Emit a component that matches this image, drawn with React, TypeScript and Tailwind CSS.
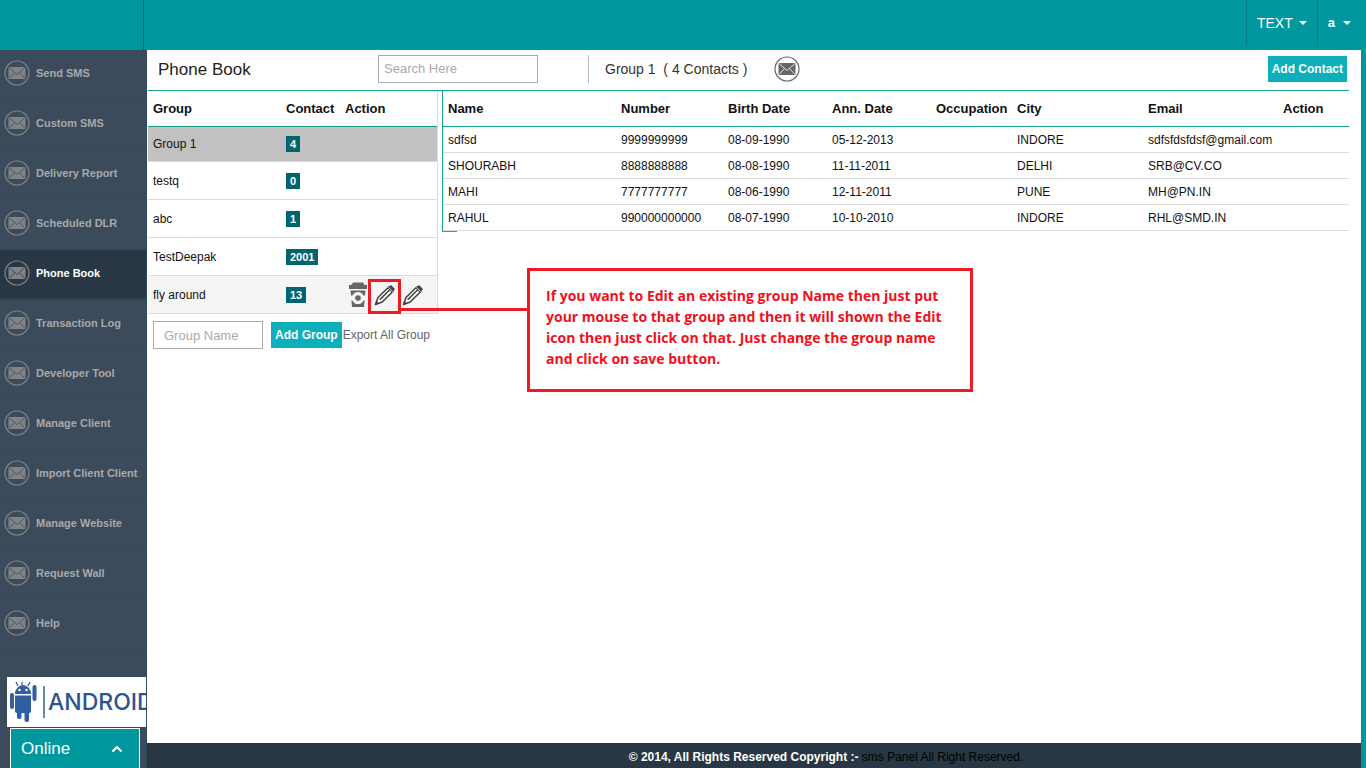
import { ChevronUp } from "lucide-react";
import { useState } from "react";
import clsx from "clsx";

const menuItems = [
  "Send SMS",
  "Custom SMS",
  "Delivery Report",
  "Scheduled DLR",
  "Phone Book",
  "Transaction Log",
  "Developer Tool",
  "Manage Client",
  "Import Client Client",
  "Manage Website",
  "Request Wall",
  "Help",
];

const groups = [
  { name: "Group 1", count: 4 },
  { name: "testq", count: 0 },
  { name: "abc", count: 1 },
  { name: "TestDeepak", count: 2001 },
  { name: "fly around", count: 13 },
];

const contacts = [
  { name: "sdfsd", number: "9999999999", birth: "08-09-1990", ann: "05-12-2013", city: "INDORE", email: "sdfsfdsfdsf@gmail.com" },
  { name: "SHOURABH", number: "8888888888", birth: "08-08-1990", ann: "11-11-2011", city: "DELHI", email: "SRB@CV.CO" },
  { name: "MAHI", number: "7777777777", birth: "08-06-1990", ann: "12-11-2011", city: "PUNE", email: "MH@PN.IN" },
  { name: "RAHUL", number: "990000000000", birth: "08-07-1990", ann: "10-10-2010", city: "INDORE", email: "RHL@SMD.IN" },
];

function MailIcon({ className, line }: { className?: string; line: string }) {
  return (
    <svg viewBox="0 0 26 26" className={clsx("w-[26px] h-[26px] shrink-0", className)} aria-hidden="true">
      <circle cx="13" cy="13" r="12" fill="none" stroke="currentColor" strokeWidth="1.2" />
      <rect x="4.5" y="7" width="17" height="12" fill="currentColor" />
      <path d="M5 7.5 13 14.5 21 7.5M5 18.5 10.5 12.5M21 18.5 15.5 12.5" fill="none" stroke={line} strokeWidth="0.8" />
    </svg>
  );
}

function BinIcon() {
  return (
    <svg viewBox="0 0 20 26" className="w-5 h-[26px]" aria-hidden="true">
      <path d="M5 0.5h10l1.5 2.5H19v4H1V3h2.5z" fill="#666" />
      <path d="M2.5 8.5h15L16 25H4z" fill="#666" />
      <path d="M1 13.5h3.5a6 6 0 0 1 11 0H19v5h-3.5a6 6 0 0 1-11 0H1z" fill="#f5f5f5" />
      <circle cx="10" cy="16" r="2.8" fill="#666" />
    </svg>
  );
}

function PencilIcon() {
  return (
    <svg viewBox="0 0 22 22" className="w-[22px] h-[22px]" aria-hidden="true">
      <path d="M1.5 20.5 4 13.5 15 2.8 19.2 7 8.2 18z" fill="#fff" stroke="#444" strokeWidth="1.6" strokeLinejoin="round" />
      <path d="M5.8 15.6 15.8 5.8" stroke="#444" strokeWidth="1.5" />
      <path d="M13.6 4.2 17 1l4 4-3.2 3.4z" fill="#444" />
      <path d="M14.3 3.2 18.8 7.7" stroke="#fff" strokeWidth="0.8" />
      <path d="M1 21 2.5 17 5 19.5z" fill="#444" />
    </svg>
  );
}

function AndroidLogo() {
  return (
    <svg viewBox="0 0 30 42" className="w-[30px] h-[42px] shrink-0" aria-hidden="true">
      <g fill="#2f5f9e">
        <path d="M7 13a8 9 0 0 1 16 0z" />
        <path d="M7 14.5h16V30a2 2 0 0 1-2 2H9a2 2 0 0 1-2-2z" />
        <rect x="2" y="12" width="4" height="16" rx="2" />
        <rect x="24.5" y="4" width="4" height="16" rx="2" />
        <rect x="9" y="28" width="4.5" height="10" rx="2" />
        <rect x="16.5" y="28" width="4.5" height="13" rx="2" />
      </g>
      <path d="M10 5 8 1M14 4V1M20 5l2-4" stroke="#2f5f9e" strokeWidth="1.3" />
      <circle cx="11.5" cy="9" r="1.2" fill="#fff" />
      <circle cx="18.5" cy="9" r="1.2" fill="#fff" />
    </svg>
  );
}

function Caret() {
  return <span className="border-x-4 border-t-4 border-x-transparent border-t-white" />;
}

function Header() {
  return (
    <header className="flex h-[50px] bg-[#00979e] text-white">
      <div className="w-36 border-r border-[#007077]" />
      <div className="ml-auto flex pb-1">
        <button className="flex items-center gap-[6px] border-l border-[#007b82] px-[10px] text-sm">
          TEXT <Caret />
        </button>
        <button className="flex items-center gap-2 border-l border-[#007b82] pl-[10px] pr-[15px] text-[13px] font-bold">
          a <Caret />
        </button>
      </div>
    </header>
  );
}

function Sidebar() {
  return (
    <aside className="flex w-[147px] shrink-0 flex-col overflow-hidden border-r border-[#2c4a5c] bg-[#3b4b5b]">
      <nav>
        {menuItems.map((item) => {
          const active = item === "Phone Book";
          return (
            <a
              key={item}
              href="#"
              className={clsx(
                "flex h-[50px] items-center gap-[6px] border-b-2 pl-1 pb-[2px] text-[11px] font-bold whitespace-nowrap",
                active
                  ? "border-[#34434f] bg-[#283743] text-white"
                  : "border-[#394959] text-[#a9a9a9]"
              )}
            >
              <MailIcon className="text-[#818487]" line={active ? "#283743" : "#3b4b5b"} />
              {item}
            </a>
          );
        })}
      </nav>
      <div className="mt-auto ml-[7px] flex h-[50px] items-center overflow-hidden bg-white pl-px">
        <AndroidLogo />
        <div className="ml-[5px] h-8 border-l-2 border-[#5f8f9e]" />
        <span className="pl-[3px] text-[23px] font-medium text-[#2b5590] font-['Inter',sans-serif]">ANDROID</span>
      </div>
      <button className="mr-[6px] ml-[10px] mt-px flex h-10 items-center justify-between border border-b-0 border-white bg-[#00979e] pl-[10px] pr-[14px] text-[17px] text-white">
        Online
        <ChevronUp className="h-4 w-4" strokeWidth={3} />
      </button>
    </aside>
  );
}

function Toolbar() {
  return (
    <div className="flex h-10 items-center border-b border-[#16a085] pb-1 pl-[10px]">
      <h1 className="w-[220px] pt-[3px] text-[17px] text-[#222]">Phone Book</h1>
      <input
        type="search"
        aria-label="Search contacts"
        placeholder="Search Here"
        className="h-7 w-40 border border-[#aaa] px-[5px] text-[13px] placeholder:text-[#aaa]"
      />
      <div className="ml-[50px] flex h-7 items-center border-l border-[#bbb] pl-4">
        <h2 className="w-[169px] text-sm whitespace-pre text-[#333]">Group 1  ( 4 Contacts )</h2>
        <button aria-label="Send message">
          <MailIcon className="text-[#666]" line="#fff" />
        </button>
      </div>
      <button className="ml-auto mr-[2px] h-[26px] bg-[#0cafba] px-1 text-xs font-bold text-white">
        Add Contact
      </button>
    </div>
  );
}

function GroupList() {
  const [groupName, setGroupName] = useState("");

  return (
    <section className="w-[290px] shrink-0">
      <table className="w-full table-fixed border-separate border-spacing-0 border-r border-[#ddd] text-left text-xs text-[#111]">
        <colgroup>
          <col className="w-[138px]" />
          <col className="w-[59px]" />
          <col />
        </colgroup>
        <thead>
          <tr className="h-9 text-[13px] [&>th]:border-b [&>th]:border-[#16a085]">
            <th className="pl-[5px]">Group</th>
            <th>Contact</th>
            <th>Action</th>
          </tr>
        </thead>
        <tbody>
          {groups.map((group, i) => (
            <tr
              key={group.name}
              className={clsx(
                "[&>td]:border-b [&>td]:border-[#ddd]",
                i === 0 ? "h-[35px] bg-[#c1c1c1]" : "h-[38px]",
                i === 4 && "bg-[#f5f5f5]"
              )}
            >
              <td className="pl-[5px]">{group.name}</td>
              <td>
                <span className="inline-block h-4 bg-[#00656e] px-1 text-[11px] leading-4 font-bold text-white">
                  {group.count}
                </span>
              </td>
              <td>
                {group.name === "fly around" && (
                  <div className="flex items-center gap-[6px] pl-[3px]">
                    <button aria-label="Delete group">
                      <BinIcon />
                    </button>
                    <button aria-label="Edit group" className="relative">
                      <PencilIcon />
                      <span className="absolute -top-[5px] -right-[5px] -bottom-2 -left-[6px] border-3 border-[#ed1c24]" />
                    </button>
                    <button aria-label="Save group">
                      <PencilIcon />
                    </button>
                  </div>
                )}
              </td>
            </tr>
          ))}
        </tbody>
      </table>
      <form className="flex items-center pt-[7px] pl-[5px]" onSubmit={(e) => e.preventDefault()}>
        <input
          type="text"
          aria-label="Group name"
          placeholder="Group Name"
          value={groupName}
          onChange={(e) => setGroupName(e.target.value)}
          className="h-7 w-[110px] border border-[#aaa] px-[10px] text-[13px] placeholder:text-[#aaa]"
        />
        <button className="ml-2 h-[26px] bg-[#0cafba] px-1 text-xs font-bold whitespace-nowrap text-white">
          Add Group
        </button>
        <a href="#" className="pl-px text-xs whitespace-nowrap text-[#666]">
          Export All Group
        </a>
      </form>
    </section>
  );
}

function ContactTable() {
  return (
    <section className="ml-1 min-w-0 flex-1">
      <table className="w-full table-fixed border-separate border-spacing-0 border-l border-[#16a085] text-left text-xs text-[#111]">
        <colgroup>
          <col className="w-[178px]" />
          <col className="w-[107px]" />
          <col className="w-[104px]" />
          <col className="w-[104px]" />
          <col className="w-[81px]" />
          <col className="w-[131px]" />
          <col className="w-[135px]" />
          <col />
        </colgroup>
        <thead>
          <tr className="h-9 text-[13px] [&>th]:border-b [&>th]:border-[#16a085]">
            <th className="pl-[5px]">Name</th>
            <th>Number</th>
            <th>Birth Date</th>
            <th>Ann. Date</th>
            <th>Occupation</th>
            <th>City</th>
            <th>Email</th>
            <th>Action</th>
          </tr>
        </thead>
        <tbody>
          {contacts.map((c) => (
            <tr key={c.number} className="h-[26px] [&>td]:border-b [&>td]:border-[#ddd]">
              <td className="pl-[5px]">{c.name}</td>
              <td>{c.number}</td>
              <td>{c.birth}</td>
              <td>{c.ann}</td>
              <td></td>
              <td>{c.city}</td>
              <td>{c.email}</td>
              <td></td>
            </tr>
          ))}
        </tbody>
      </table>
      <div className="w-[15px] border-t border-[#0cafba]" />
    </section>
  );
}

function HelpCallout() {
  return (
    <div className="absolute top-[177px] left-[253px] flex items-start">
      <div className="mt-10 w-[126px] border-t-3 border-[#ed1c24]" />
      <p className="h-[124px] w-[446px] border-3 border-[#ed1c24] bg-white pt-[14px] pl-4 text-[14px] leading-[21px] font-bold text-[#f2101c] font-['Open_Sans',sans-serif]">
        If you want to Edit an existing group Name then just put
        <br />
        your mouse to that group and then it will shown the Edit
        <br />
        icon then just click on that. Just change the group name
        <br />
        and click on save button.
      </p>
    </div>
  );
}

export default function App() {
  return (
    <div className="flex min-h-screen flex-col font-['Liberation_Sans',Arial,sans-serif]">
      <Header />
      <div className="flex flex-1">
        <Sidebar />
        <div className="flex min-w-0 flex-1 flex-col">
          <main className="flex-1 border-r-5 border-[#0093a0] bg-white pt-px pr-3 pl-px">
            <Toolbar />
            <div className="relative flex">
              <GroupList />
              <ContactTable />
              <HelpCallout />
            </div>
          </main>
          <footer className="flex h-[25px] items-center justify-center border-r-5 border-[#0093a0] bg-[#283743] pl-[144px] pt-[2px] text-xs text-black">
            <p>
              <strong className="text-white">© 2014, All Rights Reserved Copyright :-</strong> sms Panel All Right Reserved.
            </p>
          </footer>
        </div>
      </div>
    </div>
  );
}
